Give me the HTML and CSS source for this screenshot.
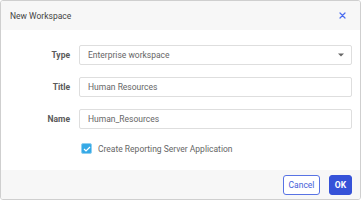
FILE: index.html
```html
<!DOCTYPE html>
<html>
<head>
<meta charset="utf-8">
<link rel="stylesheet" href="styles.css">
</head>
<body>
<div class="dialog">
  <div class="header">
    <span class="title">New Workspace</span>
    <button class="close" aria-label="Close">
      <svg width="7" height="7" viewBox="0 0 7 7"><path d="M1 1L6 6M6 1L1 6" stroke="#4a6cf0" stroke-width="1.2" stroke-linecap="round"/></svg>
    </button>
  </div>
  <div class="body">
    <div class="form">
      <label class="label">Type</label>
      <div class="field select">
        <span>Enterprise workspace</span>
        <svg width="6" height="4" viewBox="0 0 6 4"><path d="M0 0.5H6L3 3.5Z" fill="#666"/></svg>
      </div>
      <label class="label">Title</label>
      <div class="field">Human Resources</div>
      <label class="label">Name</label>
      <div class="field">Human_Resources</div>
    </div>
    <div class="check-row">
      <span class="checkbox">
        <svg width="8" height="6" viewBox="0 0 8 6"><path d="M1 3L3 5L7 1" stroke="#fff" stroke-width="1.2" fill="none"/></svg>
      </span>
      <span class="check-label">Create Reporting Server Application</span>
    </div>
  </div>
  <div class="footer">
    <button class="btn btn-outline">Cancel</button>
    <button class="btn btn-primary">OK</button>
  </div>
</div>
</body>
</html>
```
FILE: styles.css
```css
* { box-sizing: border-box; }
html, body { margin: 0; padding: 0; background: #fff; }
body { font-family: Roboto, "Liberation Sans", sans-serif; font-size: 8.5px; color: #5c5c5c; }
.dialog {
  width: 361px;
  height: 200px;
  border: 1px solid #cfcfcf;
  border-radius: 3px;
  display: flex;
  flex-direction: column;
  overflow: hidden;
}
.header {
  height: 29px;
  background: #f7f7f7;
  display: flex;
  align-items: center;
  justify-content: space-between;
  padding: 0 14px 0 9px;
  flex: none;
}
.title { font-size: 8.5px; color: #444; }
.close {
  border: 0; background: none; padding: 0; margin: 0;
  width: 7px; height: 7px; display: flex;
}
.body {
  flex: 1;
  background: #fff;
  padding: 15px 8px 0 0;
}
.form {
  display: grid;
  grid-template-columns: 69px 1fr;
  column-gap: 9px;
  row-gap: 12px;
  align-items: center;
}
.label {
  text-align: right;
  font-weight: 700;
  color: #5a5a5a;
}
.field {
  height: 20px;
  border: 1px solid #dedede;
  border-radius: 2px;
  padding: 0 8px;
  display: flex;
  align-items: center;
  color: #666;
}
.select { justify-content: space-between; padding-right: 7px; }
.check-row {
  display: flex;
  align-items: center;
  margin-top: 14px;
  padding-left: 80px;
  gap: 6px;
}
.checkbox {
  width: 11px; height: 11px;
  background: #35a9e6;
  border: 1px solid #8fd0f2;
  border-radius: 2px;
  display: flex; align-items: center; justify-content: center;
}
.check-label { color: #666; }
.footer {
  height: 29px;
  flex: none;
  background: #f7f7f7;
  display: flex;
  justify-content: flex-end;
  align-items: center;
  gap: 9px;
  padding-right: 8px;
}
.btn {
  height: 20px;
  font-family: Roboto, "Liberation Sans", sans-serif;
  font-size: 8.5px;
  border-radius: 3px;
  padding: 0 4px;
  cursor: pointer;
}
.btn-outline { border: 1px solid #5873e4; background: #fff; color: #4560d8; width: 37px; }
.btn-primary { border: 1px solid #3552d8; background: #3552d8; color: #fff; font-weight: 700; width: 23px; }
```
